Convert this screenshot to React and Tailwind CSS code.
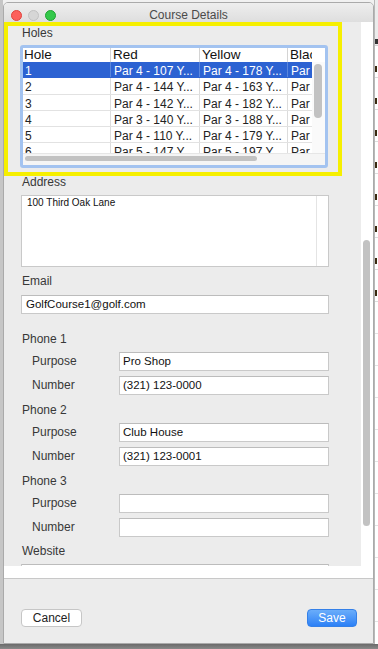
import React from "react";

const rows = [
  ["1", "Par 4 - 107 Y...", "Par 4 - 178 Y...", "Par"],
  ["2", "Par 4 - 144 Y...", "Par 4 - 163 Y...", "Par"],
  ["3", "Par 4 - 142 Y...", "Par 4 - 182 Y...", "Par"],
  ["4", "Par 3 - 140 Y...", "Par 3 - 188 Y...", "Par"],
  ["5", "Par 4 - 110 Y...", "Par 4 - 179 Y...", "Par"],
  ["6", "Par 5 - 147 Y...", "Par 5 - 197 Y...", "Par"],
];

function Label({ children, className = "" }) {
  return (
    <div className={"h-[12px] leading-[12px] text-[12px] text-[#383838] pl-[18px] " + className}>
      {children}
    </div>
  );
}

function Field({ value = "", className = "" }) {
  return (
    <div
      className={
        "h-[19px] bg-white border border-[#c9c9c9] border-t-[#bcbcbc] flex items-center pl-[3px] text-[11.5px] text-[#111] whitespace-nowrap overflow-hidden " +
        className
      }
    >
      {value}
    </div>
  );
}

function PhoneRow({ label, value, className = "" }) {
  return (
    <div className={"flex items-center h-[19px] " + className}>
      <div className="ml-[28px] w-[87px] text-[12px] text-[#383838] leading-[19px]">{label}</div>
      <Field value={value} className="w-[210px]" />
    </div>
  );
}

function Table() {
  return (
    <div className="ml-[12px] mt-[5px] w-[308px] h-[123px] border-[3px] border-[#a3c3f0] rounded-[3px] bg-white flex flex-col overflow-hidden">
      {/* header */}
      <div className="h-[14px] flex text-[13.5px] leading-[14px] text-[#111] bg-white">
        <div className="w-[88px] pl-[1px] border-r border-[#d4d4d4]">Hole</div>
        <div className="w-[89px] pl-[2px] border-r border-[#d4d4d4]">Red</div>
        <div className="w-[88px] pl-[2px] border-r border-[#d4d4d4]">Yellow</div>
        <div className="w-[24px] pl-[2px] overflow-hidden whitespace-nowrap">Black</div>
      </div>
      {/* body */}
      <div className="h-[91px] flex">
        <div className="w-[289px] overflow-hidden">
          {rows.map((r, i) => {
            const sel = i === 0;
            const sep = sel ? "border-[#5a86dc]" : "border-[#dcdcdc]";
            return (
              <div
                key={i}
                className={
                  "h-[16.3px] flex text-[12px] leading-[16px] whitespace-nowrap border-b " +
                  (sel ? "bg-[#2c62d2] text-white border-[#2c62d2]" : "bg-white text-[#222] border-[#e2e2e2]")
                }
              >
                <div className={"w-[88px] pl-[2px] pt-[1px] border-r overflow-hidden " + sep}>{r[0]}</div>
                <div className={"w-[89px] pl-[3px] pt-[1px] border-r overflow-hidden " + sep}>{r[1]}</div>
                <div className={"w-[88px] pl-[3px] pt-[1px] border-r overflow-hidden " + sep}>{r[2]}</div>
                <div className="w-[24px] pl-[3px] pt-[1px] overflow-hidden">{r[3]}</div>
              </div>
            );
          })}
        </div>
        <div className="w-[13px] bg-[#fafafa] pt-[2px]">
          <div className="ml-[2px] w-[8px] h-[54px] rounded-full bg-[#c2c2c2]" />
        </div>
      </div>
      {/* horizontal scroller */}
      <div className="h-[12px] bg-[#f5f5f5] border-t border-[#e6e6e6] pt-[2px]">
        <div className="ml-[2px] w-[232px] h-[5px] rounded-full bg-[#c2c2c2]" />
      </div>
    </div>
  );
}

export default function App() {
  return (
    <div className="w-[378px] h-[649px] overflow-hidden flex flex-col bg-[#f1f1f1] font-['Liberation_Sans',Arial,sans-serif]">
      <div className="flex h-[644px]">
        {/* left background strip */}
        <div className="w-[3px] bg-[#c6c6c6]" />

        {/* window */}
        <div className="w-[371px] h-[642px] mt-[2px] flex flex-col border border-[#aaaaaa] rounded-t-[5px] overflow-hidden bg-[#ececec]">
          {/* title bar */}
          <div className="h-[19px] flex bg-gradient-to-b from-[#eeeeee] to-[#dedede]">
            <div className="w-[52px] flex items-start pl-[7px] pt-[7px] gap-[6px]">
              <div className="w-[11px] h-[11px] rounded-full bg-[#fc605c] border border-[#e0443e]" />
              <div className="w-[11px] h-[11px] rounded-full bg-[#d6d6d6] border border-[#c2c2c2]" />
              <div className="w-[11px] h-[11px] rounded-full bg-[#34c84a] border border-[#20a332]" />
            </div>
            <div className="flex-1 text-center text-[12px] leading-[13px] mt-[6px] text-[#4a4a4a]">Course Details</div>
            <div className="w-[52px]" />
          </div>

          {/* scroll view */}
          <div className="h-[557px] flex border-b border-[#c8c8c8] bg-white">
            <div className="w-[357px] flex flex-col">
              <div className="h-[544px] bg-[#ececec] overflow-hidden flex flex-col">
                {/* highlighted holes box */}
                <div className="w-[338px] h-[154px] border-4 border-[#f6ef00] flex flex-col shrink-0">
                  <div className="h-[14px] leading-[14px] text-[12px] text-[#383838] pl-[14px]">Holes</div>
                  <Table />
                </div>

                <Label>Address</Label>
                <div className="mt-[7px] ml-[17px] w-[308px] h-[72px] bg-white border border-[#c9c9c9] flex shrink-0">
                  <div className="flex-1 pl-[5px] pt-[1px] text-[10px] leading-[12px] text-[#111]">100 Third Oak Lane</div>
                  <div className="w-[12px] border-l border-[#e4e4e4]" />
                </div>

                <Label className="mt-[8px]">Email</Label>
                <Field value="GolfCourse1@golf.com" className="mt-[8px] ml-[17px] w-[308px] pl-[4px] shrink-0" />

                <Label className="mt-[19px]">Phone 1</Label>
                <PhoneRow label="Purpose" value="Pro Shop" className="mt-[7px]" />
                <PhoneRow label="Number" value="(321) 123-0000" className="mt-[5px]" />

                <Label className="mt-[9px]">Phone 2</Label>
                <PhoneRow label="Purpose" value="Club House" className="mt-[7px]" />
                <PhoneRow label="Number" value="(321) 123-0001" className="mt-[5px]" />

                <Label className="mt-[9px]">Phone 3</Label>
                <PhoneRow label="Purpose" value="" className="mt-[7px]" />
                <PhoneRow label="Number" value="" className="mt-[5px]" />

                <Label className="mt-[8px]">Website</Label>
                <Field value="" className="mt-[7px] ml-[17px] w-[308px] shrink-0" />
              </div>
            </div>
            <div className="w-[12px] bg-white pt-[218px]">
              <div className="ml-[2px] w-[7px] h-[286px] rounded-full bg-[#c2c2c2]" />
            </div>
          </div>

          {/* bottom bar */}
          <div className="h-[64px] bg-[#ececec] flex items-start justify-between pt-[30px]">
            <div className="ml-[17px] w-[61px] h-[18px] rounded-[4px] bg-white border border-[#c6c6c6] flex items-center justify-center text-[12px] text-[#222]">
              Cancel
            </div>
            <div className="mr-[16px] w-[50px] h-[18px] rounded-[4px] bg-gradient-to-b from-[#6aadfa] to-[#2b80f6] border border-[#3480e8] flex items-center justify-center text-[12px] text-white">
              Save
            </div>
          </div>
        </div>

        {/* right background strip */}
        <div className="flex-1 flex flex-col bg-white border-l border-[#b8b8b8]">
          <div className="h-[46px] bg-[#ececec] border-b border-[#cfcfcf] flex items-end">
            <div className="w-[3px] h-[5px] bg-[#333] mb-[1px]" />
          </div>
          {[0, 1, 2, 3, 4, 5, 6, 7].map((i) => (
            <div key={i} className="h-[32px] border-b border-[#dddddd] pt-[20px]">
              <div className="w-[2px] h-[6px] bg-[#3a2a10]" />
            </div>
          ))}
          {[0, 1, 2, 3, 4, 5, 6, 7, 8, 9].map((i) => (
            <div key={"b" + i} className="h-[32px] border-b border-[#e3e3e3]" />
          ))}
        </div>
      </div>
      <div className="flex-1 bg-gradient-to-b from-[#6a6a6a] to-[#8a8a8a]" />
    </div>
  );
}
